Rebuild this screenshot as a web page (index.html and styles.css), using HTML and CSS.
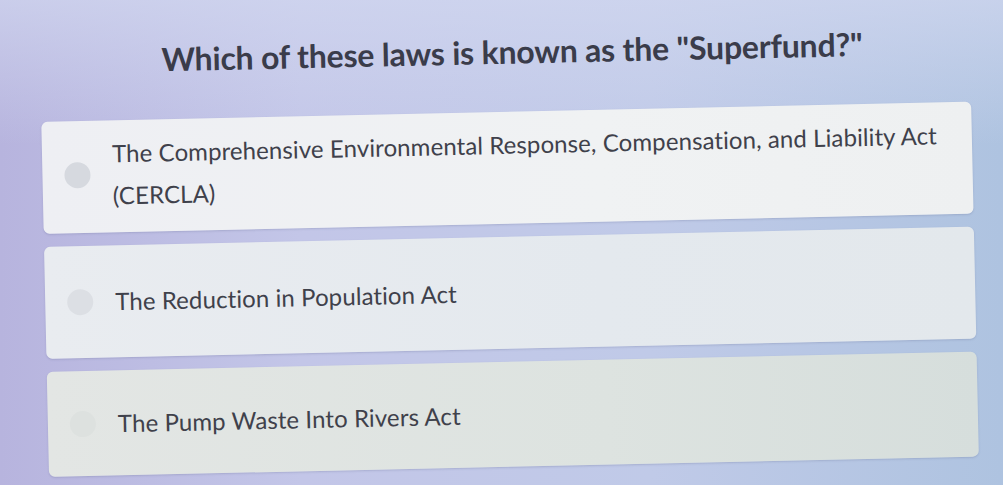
FILE: index.html
```html
<!DOCTYPE html>
<html>
<head>
<meta charset="utf-8">
<link rel="stylesheet" href="styles.css">
</head>
<body>
<div class="screen">
  <div class="quiz">
    <h1 class="question">Which of these laws is known as the "Superfund?"</h1>
    <div class="options">
      <div class="option option-1">
        <span class="radio"></span>
        <span class="label">The Comprehensive Environmental Response, Compensation, and Liability Act (CERCLA)</span>
      </div>
      <div class="option option-2">
        <span class="radio"></span>
        <span class="label">The Reduction in Population Act</span>
      </div>
      <div class="option option-3">
        <span class="radio"></span>
        <span class="label">The Pump Waste Into Rivers Act</span>
      </div>
    </div>
  </div>
</div>
</body>
</html>
```
FILE: styles.css
```css
html, body {
  margin: 0;
  padding: 0;
}
body {
  width: 1003px;
  height: 485px;
  overflow: hidden;
  font-family: Lato, "Open Sans", sans-serif;
}
.screen {
  width: 1003px;
  height: 485px;
  background:
    linear-gradient(180deg, rgba(210, 216, 240, 0.7) 0%, rgba(190, 200, 232, 0) 30%),
    linear-gradient(90deg, #b7b4de 0%, #c3c6e8 30%, #c0cae8 65%, #aec3e0 100%);
  overflow: hidden;
}
.quiz {
  width: 930px;
  margin-left: 44px;
  transform: rotate(-1.25deg);
  transform-origin: 500px 240px;
}
.question {
  margin: 0;
  height: 101px;
  padding-bottom: 10px;
  display: flex;
  align-items: center;
  justify-content: center;
  padding-left: 14px;
  font-size: 32px;
  font-weight: 700;
  color: #3a3c4a;
  letter-spacing: -0.2px;
}
.options {
  display: flex;
  flex-direction: column;
  gap: 13px;
}
.option {
  display: flex;
  align-items: center;
  gap: 22px;
  padding: 14px 30px 14px 22px;
  border-radius: 6px;
  box-shadow: 0 1px 2px rgba(90, 100, 140, 0.25);
}
.option-1 {
  padding-top: 12px;
  padding-bottom: 16px;
  background: linear-gradient(90deg, #eeeff3 0%, #f0f2f3 60%, #eef0f1 100%);
}
.option-2 {
  min-height: 84px;
  background: linear-gradient(90deg, #e9ecf0 0%, #e4e9ee 60%, #e3e8ec 100%);
}
.option-3 {
  min-height: 77px;
  background: linear-gradient(90deg, #e3e6e4 0%, #dde3e0 60%, #d6dedc 100%);
}
.radio {
  flex: none;
  width: 26px;
  height: 26px;
  border-radius: 50%;
  background: #d6d9df;
}
.option-2 .radio {
  background: #dcdfe4;
}
.option-3 .radio {
  background: #dde1df;
}
.label {
  font-size: 24px;
  line-height: 42px;
  color: #3f414b;
  letter-spacing: 0.1px;
}
```
